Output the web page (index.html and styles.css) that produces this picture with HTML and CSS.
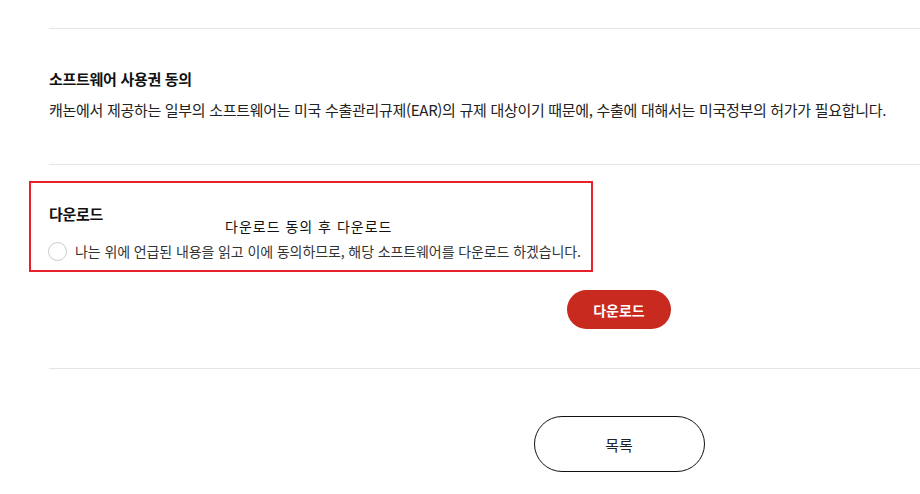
FILE: index.html
```html
<!DOCTYPE html>
<html lang="ko">
<head>
<meta charset="utf-8">
<title>소프트웨어 다운로드</title>
<link rel="stylesheet" href="styles.css">
</head>
<body>
<div class="wrap">
  <section class="sec sec-license">
    <h3 class="sec-title">소프트웨어 사용권 동의</h3>
    <p class="sec-text">캐논에서 제공하는 일부의 소프트웨어는 미국 수출관리규제(EAR)의 규제 대상이기 때문에, 수출에 대해서는 미국정부의 허가가 필요합니다.</p>
  </section>
  <section class="sec sec-download">
    <h3 class="sec-title">다운로드</h3>
    <label class="agree">
      <span class="radio"></span>
      <span class="agree-text">나는 위에 언급된 내용을 읽고 이에 동의하므로, 해당 소프트웨어를 다운로드 하겠습니다.</span>
    </label>
    <div class="btn-row">
      <button class="btn-red">다운로드</button>
    </div>
  </section>
  <section class="sec sec-list">
    <button class="btn-outline">목록</button>
  </section>
</div>
<div class="highlight"></div>
<div class="note">다운로드 동의 후 다운로드</div>
</body>
</html>
```
FILE: styles.css
```css
html, body {
  margin: 0;
  padding: 0;
  overflow: hidden;
  background: #fff;
}
body {
  font-family: "Noto Sans CJK KR", "Noto Sans", sans-serif;
  color: #222;
  font-size: 14px;
  line-height: 20px;
  position: relative;
  width: 920px;
  height: 494px;
}
.wrap {
  margin-left: 49px;
  width: 1140px;
  padding-top: 28px;
}
.sec {
  border-top: 1px solid #e5e5e5;
}
.sec-license {
  padding: 40px 0 44px;
}
.sec-title {
  margin: 0;
  font-size: 15px;
  letter-spacing: -0.3px;
  font-weight: 700;
  line-height: 20px;
  color: #111;
}
.sec-text {
  margin: 11px 0 0;
  font-size: 15px;
  letter-spacing: -0.3px;
}
.sec-download {
  padding: 39px 0 39px;
}
.agree {
  display: flex;
  align-items: center;
  gap: 8px;
  margin-top: 17px;
  margin-left: -1px;
}
.radio {
  width: 17px;
  height: 17px;
  border: 1px solid #ccc;
  border-radius: 50%;
  box-sizing: content-box;
}
.agree-text {
  color: #333;
  letter-spacing: -0.1px;
}
.btn-row {
  display: flex;
  justify-content: center;
  margin-top: 29px;
}
.btn-red {
  width: 104px;
  height: 39px;
  border: 0;
  border-radius: 20px;
  background: #c82a20;
  color: #fff;
  font-family: inherit;
  font-size: 14px;
  font-weight: 700;
}
.sec-list {
  display: flex;
  justify-content: center;
  padding-top: 47px;
}
.btn-outline {
  width: 171px;
  height: 56px;
  border: 1px solid #111;
  border-radius: 28px;
  background: #fff;
  color: #222;
  font-family: inherit;
  font-size: 15px;
}
.highlight {
  position: absolute;
  left: 29px;
  top: 181px;
  width: 560px;
  height: 87px;
  border: 2px solid #e8202a;
}
.note {
  position: absolute;
  left: 225px;
  top: 216px;
  font-size: 14px;
  letter-spacing: 1px;
  color: #111;
}
```
